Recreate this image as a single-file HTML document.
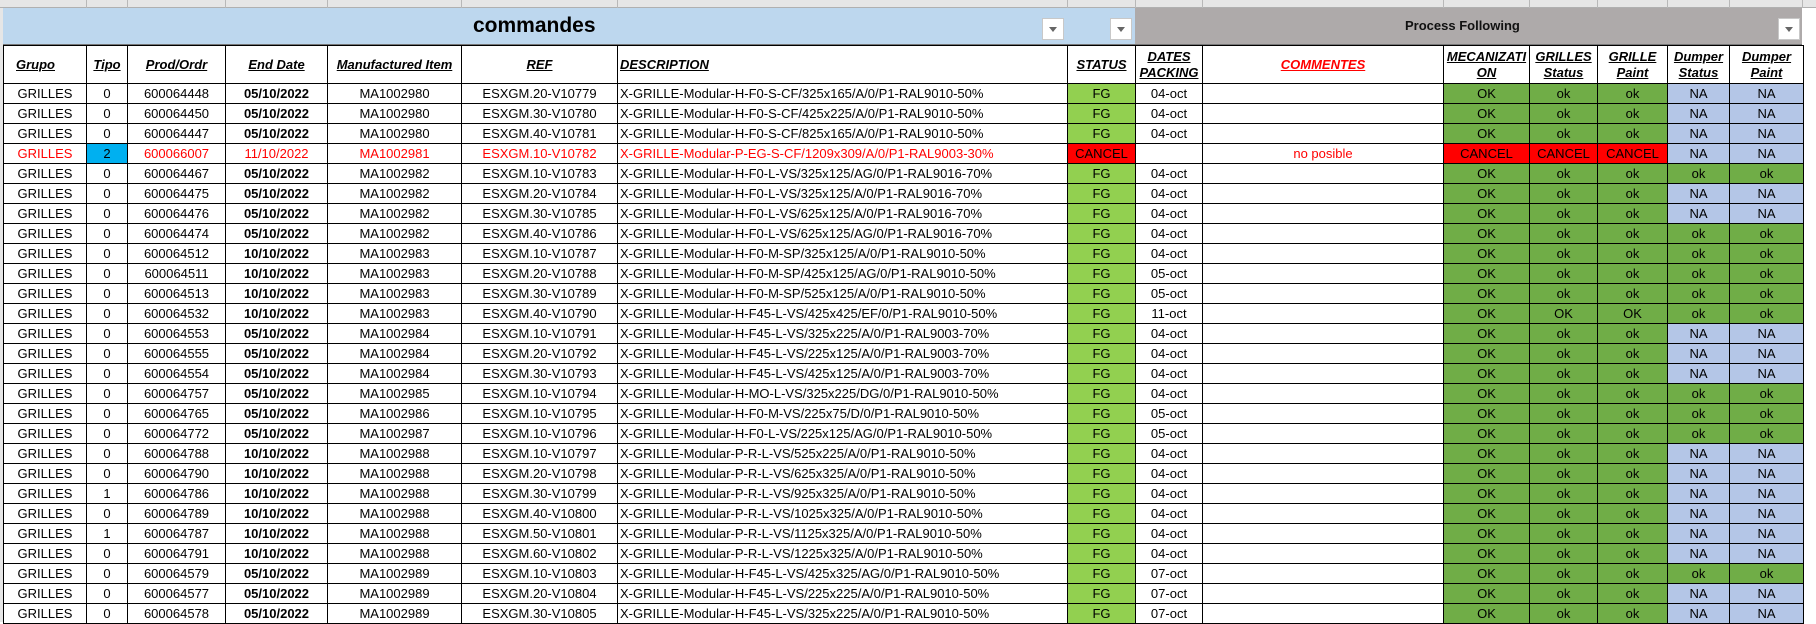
<!DOCTYPE html>
<html><head><meta charset="utf-8">
<style>
*{margin:0;padding:0;box-sizing:border-box}
body{width:1816px;height:622px;overflow:hidden;background:#fff;font-family:"Liberation Sans",sans-serif;position:relative}
#top{position:absolute;left:0;top:0;width:1816px;height:8px;background:#e6e6e6;border-bottom:1px solid #b0b0b0}
#top i{position:absolute;top:0;width:1px;height:8px;background:#b8b8b8}
#lft{position:absolute;left:0;top:8px;width:3px;height:614px;background:#e6e6e6}
#ban{position:absolute;left:3px;top:8px;width:1132px;height:37px;background:#BDD7EE;border-bottom:1px solid #777}
#ban .t{position:absolute;left:470px;top:6px;font-size:21px;font-weight:bold;color:#000}
#pf{position:absolute;left:1135px;top:8px;width:667px;height:37px;background:#AEAAAA;border-bottom:1px solid #777}
#pf .t{position:absolute;left:270px;top:10px;font-size:13px;font-weight:bold;color:#111}
.dd{position:absolute;width:22px;height:22px;background:#fff;border:1px solid #c8c8c8}
.dd:after{content:"";position:absolute;left:6px;top:8px;border-left:4px solid transparent;border-right:4px solid transparent;border-top:5px solid #666}
table{position:absolute;left:3px;top:45px;border-collapse:collapse;table-layout:fixed;width:1800px}
td{border:1px solid #000;height:20px;font-size:13px;text-align:center;white-space:nowrap;overflow:hidden;padding:0 1px;color:#000;line-height:18px}
tr.h td{height:38px;font-weight:bold;font-style:italic;text-decoration:underline;font-size:13px;line-height:16px}
td.d{text-align:left;padding-left:2px}
td.b{font-weight:bold}
.fg{background:#92D050}.ok{background:#70AD47}.na{background:#B4C6E7}.cx{background:#FF0000}
tr.r td{color:#f00}
tr.r td.cx,tr.r td.ty{color:#000}
.ty{background:#00B0F0}
</style></head><body>
<div id="top"><i style="left:86px"></i><i style="left:127px"></i><i style="left:225px"></i><i style="left:327px"></i><i style="left:461px"></i><i style="left:617px"></i><i style="left:1067px"></i><i style="left:1135px"></i><i style="left:1202px"></i><i style="left:1443px"></i><i style="left:1529px"></i><i style="left:1597px"></i><i style="left:1667px"></i><i style="left:1729px"></i><i style="left:1802px"></i></div>
<div id="lft"></div>
<div id="ban"><span class="t">commandes</span><div class="dd" style="left:1039px;top:10px"></div><div class="dd" style="left:1107px;top:10px"></div></div>
<div id="pf"><span class="t">Process Following</span><div class="dd" style="left:643px;top:10px"></div></div>
<table>
<colgroup><col style="width:83px"><col style="width:41px"><col style="width:98px"><col style="width:102px"><col style="width:134px"><col style="width:156px"><col style="width:450px"><col style="width:68px"><col style="width:67px"><col style="width:241px"><col style="width:86px"><col style="width:68px"><col style="width:70px"><col style="width:62px"><col style="width:74px"></colgroup>
<tr class="h"><td style="text-align:left;padding-left:12px">Grupo</td><td>Tipo</td><td>Prod/Ordr</td><td>End Date</td><td>Manufactured Item</td><td>REF</td><td class="d">DESCRIPTION</td><td>STATUS</td><td>DATES<br>PACKING</td><td style="color:#f00">COMMENTES</td><td>MECANIZATI<br>ON</td><td>GRILLES<br>Status</td><td>GRILLE<br>Paint</td><td>Dumper<br>Status</td><td>Dumper<br>Paint</td></tr>
<tr><td>GRILLES</td><td>0</td><td>600064448</td><td class="b">05/10/2022</td><td>MA1002980</td><td>ESXGM.20-V10779</td><td class="d">X-GRILLE-Modular-H-F0-S-CF/325x165/A/0/P1-RAL9010-50%</td><td class="fg">FG</td><td>04-oct</td><td></td><td class="ok">OK</td><td class="ok">ok</td><td class="ok">ok</td><td class="na">NA</td><td class="na">NA</td></tr>
<tr><td>GRILLES</td><td>0</td><td>600064450</td><td class="b">05/10/2022</td><td>MA1002980</td><td>ESXGM.30-V10780</td><td class="d">X-GRILLE-Modular-H-F0-S-CF/425x225/A/0/P1-RAL9010-50%</td><td class="fg">FG</td><td>04-oct</td><td></td><td class="ok">OK</td><td class="ok">ok</td><td class="ok">ok</td><td class="na">NA</td><td class="na">NA</td></tr>
<tr><td>GRILLES</td><td>0</td><td>600064447</td><td class="b">05/10/2022</td><td>MA1002980</td><td>ESXGM.40-V10781</td><td class="d">X-GRILLE-Modular-H-F0-S-CF/825x165/A/0/P1-RAL9010-50%</td><td class="fg">FG</td><td>04-oct</td><td></td><td class="ok">OK</td><td class="ok">ok</td><td class="ok">ok</td><td class="na">NA</td><td class="na">NA</td></tr>
<tr class="r"><td>GRILLES</td><td class="ty">2</td><td>600066007</td><td>11/10/2022</td><td>MA1002981</td><td>ESXGM.10-V10782</td><td class="d">X-GRILLE-Modular-P-EG-S-CF/1209x309/A/0/P1-RAL9003-30%</td><td class="cx">CANCEL</td><td></td><td>no posible</td><td class="cx">CANCEL</td><td class="cx">CANCEL</td><td class="cx">CANCEL</td><td class="na" style="color:#000">NA</td><td class="na" style="color:#000">NA</td></tr>
<tr><td>GRILLES</td><td>0</td><td>600064467</td><td class="b">05/10/2022</td><td>MA1002982</td><td>ESXGM.10-V10783</td><td class="d">X-GRILLE-Modular-H-F0-L-VS/325x125/AG/0/P1-RAL9016-70%</td><td class="fg">FG</td><td>04-oct</td><td></td><td class="ok">OK</td><td class="ok">ok</td><td class="ok">ok</td><td class="ok">ok</td><td class="ok">ok</td></tr>
<tr><td>GRILLES</td><td>0</td><td>600064475</td><td class="b">05/10/2022</td><td>MA1002982</td><td>ESXGM.20-V10784</td><td class="d">X-GRILLE-Modular-H-F0-L-VS/325x125/A/0/P1-RAL9016-70%</td><td class="fg">FG</td><td>04-oct</td><td></td><td class="ok">OK</td><td class="ok">ok</td><td class="ok">ok</td><td class="na">NA</td><td class="na">NA</td></tr>
<tr><td>GRILLES</td><td>0</td><td>600064476</td><td class="b">05/10/2022</td><td>MA1002982</td><td>ESXGM.30-V10785</td><td class="d">X-GRILLE-Modular-H-F0-L-VS/625x125/A/0/P1-RAL9016-70%</td><td class="fg">FG</td><td>04-oct</td><td></td><td class="ok">OK</td><td class="ok">ok</td><td class="ok">ok</td><td class="na">NA</td><td class="na">NA</td></tr>
<tr><td>GRILLES</td><td>0</td><td>600064474</td><td class="b">05/10/2022</td><td>MA1002982</td><td>ESXGM.40-V10786</td><td class="d">X-GRILLE-Modular-H-F0-L-VS/625x125/AG/0/P1-RAL9016-70%</td><td class="fg">FG</td><td>04-oct</td><td></td><td class="ok">OK</td><td class="ok">ok</td><td class="ok">ok</td><td class="ok">ok</td><td class="ok">ok</td></tr>
<tr><td>GRILLES</td><td>0</td><td>600064512</td><td class="b">10/10/2022</td><td>MA1002983</td><td>ESXGM.10-V10787</td><td class="d">X-GRILLE-Modular-H-F0-M-SP/325x125/A/0/P1-RAL9010-50%</td><td class="fg">FG</td><td>04-oct</td><td></td><td class="ok">OK</td><td class="ok">ok</td><td class="ok">ok</td><td class="ok">ok</td><td class="ok">ok</td></tr>
<tr><td>GRILLES</td><td>0</td><td>600064511</td><td class="b">10/10/2022</td><td>MA1002983</td><td>ESXGM.20-V10788</td><td class="d">X-GRILLE-Modular-H-F0-M-SP/425x125/AG/0/P1-RAL9010-50%</td><td class="fg">FG</td><td>05-oct</td><td></td><td class="ok">OK</td><td class="ok">ok</td><td class="ok">ok</td><td class="ok">ok</td><td class="ok">ok</td></tr>
<tr><td>GRILLES</td><td>0</td><td>600064513</td><td class="b">10/10/2022</td><td>MA1002983</td><td>ESXGM.30-V10789</td><td class="d">X-GRILLE-Modular-H-F0-M-SP/525x125/A/0/P1-RAL9010-50%</td><td class="fg">FG</td><td>05-oct</td><td></td><td class="ok">OK</td><td class="ok">ok</td><td class="ok">ok</td><td class="ok">ok</td><td class="ok">ok</td></tr>
<tr><td>GRILLES</td><td>0</td><td>600064532</td><td class="b">10/10/2022</td><td>MA1002983</td><td>ESXGM.40-V10790</td><td class="d">X-GRILLE-Modular-H-F45-L-VS/425x425/EF/0/P1-RAL9010-50%</td><td class="fg">FG</td><td>11-oct</td><td></td><td class="ok">OK</td><td class="ok">OK</td><td class="ok">OK</td><td class="ok">ok</td><td class="ok">ok</td></tr>
<tr><td>GRILLES</td><td>0</td><td>600064553</td><td class="b">05/10/2022</td><td>MA1002984</td><td>ESXGM.10-V10791</td><td class="d">X-GRILLE-Modular-H-F45-L-VS/325x225/A/0/P1-RAL9003-70%</td><td class="fg">FG</td><td>04-oct</td><td></td><td class="ok">OK</td><td class="ok">ok</td><td class="ok">ok</td><td class="na">NA</td><td class="na">NA</td></tr>
<tr><td>GRILLES</td><td>0</td><td>600064555</td><td class="b">05/10/2022</td><td>MA1002984</td><td>ESXGM.20-V10792</td><td class="d">X-GRILLE-Modular-H-F45-L-VS/225x125/A/0/P1-RAL9003-70%</td><td class="fg">FG</td><td>04-oct</td><td></td><td class="ok">OK</td><td class="ok">ok</td><td class="ok">ok</td><td class="na">NA</td><td class="na">NA</td></tr>
<tr><td>GRILLES</td><td>0</td><td>600064554</td><td class="b">05/10/2022</td><td>MA1002984</td><td>ESXGM.30-V10793</td><td class="d">X-GRILLE-Modular-H-F45-L-VS/425x125/A/0/P1-RAL9003-70%</td><td class="fg">FG</td><td>04-oct</td><td></td><td class="ok">OK</td><td class="ok">ok</td><td class="ok">ok</td><td class="na">NA</td><td class="na">NA</td></tr>
<tr><td>GRILLES</td><td>0</td><td>600064757</td><td class="b">05/10/2022</td><td>MA1002985</td><td>ESXGM.10-V10794</td><td class="d">X-GRILLE-Modular-H-MO-L-VS/325x225/DG/0/P1-RAL9010-50%</td><td class="fg">FG</td><td>04-oct</td><td></td><td class="ok">OK</td><td class="ok">ok</td><td class="ok">ok</td><td class="ok">ok</td><td class="ok">ok</td></tr>
<tr><td>GRILLES</td><td>0</td><td>600064765</td><td class="b">05/10/2022</td><td>MA1002986</td><td>ESXGM.10-V10795</td><td class="d">X-GRILLE-Modular-H-F0-M-VS/225x75/D/0/P1-RAL9010-50%</td><td class="fg">FG</td><td>05-oct</td><td></td><td class="ok">OK</td><td class="ok">ok</td><td class="ok">ok</td><td class="ok">ok</td><td class="ok">ok</td></tr>
<tr><td>GRILLES</td><td>0</td><td>600064772</td><td class="b">05/10/2022</td><td>MA1002987</td><td>ESXGM.10-V10796</td><td class="d">X-GRILLE-Modular-H-F0-L-VS/225x125/AG/0/P1-RAL9010-50%</td><td class="fg">FG</td><td>05-oct</td><td></td><td class="ok">OK</td><td class="ok">ok</td><td class="ok">ok</td><td class="ok">ok</td><td class="ok">ok</td></tr>
<tr><td>GRILLES</td><td>0</td><td>600064788</td><td class="b">10/10/2022</td><td>MA1002988</td><td>ESXGM.10-V10797</td><td class="d">X-GRILLE-Modular-P-R-L-VS/525x225/A/0/P1-RAL9010-50%</td><td class="fg">FG</td><td>04-oct</td><td></td><td class="ok">OK</td><td class="ok">ok</td><td class="ok">ok</td><td class="na">NA</td><td class="na">NA</td></tr>
<tr><td>GRILLES</td><td>0</td><td>600064790</td><td class="b">10/10/2022</td><td>MA1002988</td><td>ESXGM.20-V10798</td><td class="d">X-GRILLE-Modular-P-R-L-VS/625x325/A/0/P1-RAL9010-50%</td><td class="fg">FG</td><td>04-oct</td><td></td><td class="ok">OK</td><td class="ok">ok</td><td class="ok">ok</td><td class="na">NA</td><td class="na">NA</td></tr>
<tr><td>GRILLES</td><td>1</td><td>600064786</td><td class="b">10/10/2022</td><td>MA1002988</td><td>ESXGM.30-V10799</td><td class="d">X-GRILLE-Modular-P-R-L-VS/925x325/A/0/P1-RAL9010-50%</td><td class="fg">FG</td><td>04-oct</td><td></td><td class="ok">OK</td><td class="ok">ok</td><td class="ok">ok</td><td class="na">NA</td><td class="na">NA</td></tr>
<tr><td>GRILLES</td><td>0</td><td>600064789</td><td class="b">10/10/2022</td><td>MA1002988</td><td>ESXGM.40-V10800</td><td class="d">X-GRILLE-Modular-P-R-L-VS/1025x325/A/0/P1-RAL9010-50%</td><td class="fg">FG</td><td>04-oct</td><td></td><td class="ok">OK</td><td class="ok">ok</td><td class="ok">ok</td><td class="na">NA</td><td class="na">NA</td></tr>
<tr><td>GRILLES</td><td>1</td><td>600064787</td><td class="b">10/10/2022</td><td>MA1002988</td><td>ESXGM.50-V10801</td><td class="d">X-GRILLE-Modular-P-R-L-VS/1125x325/A/0/P1-RAL9010-50%</td><td class="fg">FG</td><td>04-oct</td><td></td><td class="ok">OK</td><td class="ok">ok</td><td class="ok">ok</td><td class="na">NA</td><td class="na">NA</td></tr>
<tr><td>GRILLES</td><td>0</td><td>600064791</td><td class="b">10/10/2022</td><td>MA1002988</td><td>ESXGM.60-V10802</td><td class="d">X-GRILLE-Modular-P-R-L-VS/1225x325/A/0/P1-RAL9010-50%</td><td class="fg">FG</td><td>04-oct</td><td></td><td class="ok">OK</td><td class="ok">ok</td><td class="ok">ok</td><td class="na">NA</td><td class="na">NA</td></tr>
<tr><td>GRILLES</td><td>0</td><td>600064579</td><td class="b">05/10/2022</td><td>MA1002989</td><td>ESXGM.10-V10803</td><td class="d">X-GRILLE-Modular-H-F45-L-VS/425x325/AG/0/P1-RAL9010-50%</td><td class="fg">FG</td><td>07-oct</td><td></td><td class="ok">OK</td><td class="ok">ok</td><td class="ok">ok</td><td class="ok">ok</td><td class="ok">ok</td></tr>
<tr><td>GRILLES</td><td>0</td><td>600064577</td><td class="b">05/10/2022</td><td>MA1002989</td><td>ESXGM.20-V10804</td><td class="d">X-GRILLE-Modular-H-F45-L-VS/225x225/A/0/P1-RAL9010-50%</td><td class="fg">FG</td><td>07-oct</td><td></td><td class="ok">OK</td><td class="ok">ok</td><td class="ok">ok</td><td class="na">NA</td><td class="na">NA</td></tr>
<tr><td>GRILLES</td><td>0</td><td>600064578</td><td class="b">05/10/2022</td><td>MA1002989</td><td>ESXGM.30-V10805</td><td class="d">X-GRILLE-Modular-H-F45-L-VS/325x225/A/0/P1-RAL9010-50%</td><td class="fg">FG</td><td>07-oct</td><td></td><td class="ok">OK</td><td class="ok">ok</td><td class="ok">ok</td><td class="na">NA</td><td class="na">NA</td></tr>
</table>
</body></html>
